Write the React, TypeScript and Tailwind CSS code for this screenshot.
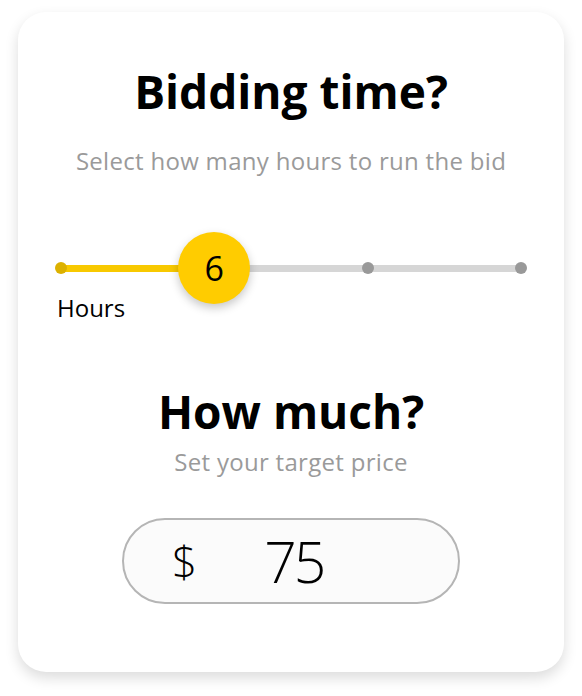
import React from "react";

const font = { fontFamily: '"Open Sans", "Noto Sans", sans-serif' };

export default function App() {
  const stops = [0, 1, 2, 3];
  const active = 1;
  const width = 460;
  const step = width / 3;
  return (
    <div className="min-h-screen bg-white pt-3 pl-[18px]" style={font}>
      <div className="w-[546px] h-[660px] rounded-[28px] bg-white shadow-[0_6px_14px_rgba(0,0,0,0.14)] flex flex-col items-center">
        <h1 className="mt-[56px] text-[46px] font-bold leading-none text-black">
          Bidding time?
        </h1>
        <p className="mt-[35px] text-[24px] leading-none text-[#9a9a9a] tracking-[0.3px]">
          Select how many hours to run the bid
        </p>
        <div className="relative mt-[59px] w-[460px] h-[72px]">
          <div className="absolute left-0 right-0 top-[33px] h-[7px] bg-[#d6d6d6]" />
          <div className="absolute left-0 top-[33px] h-[7px] bg-[#f8c900]" style={{ width: step * active }} />
          {stops.map((s) => (
            <div
              key={s}
              className={
                s < active
                  ? "absolute top-[30px] w-[12px] h-[12px] -ml-[6px] rounded-full bg-[#dcb100]"
                  : "absolute top-[30px] w-[12px] h-[12px] -ml-[6px] rounded-full bg-[#999999]"
              }
              style={{ left: step * s }}
            />
          ))}
          <div
            className="absolute top-0 w-[72px] h-[72px] -ml-[36px] rounded-full bg-[#ffcc00] shadow-[0_4px_10px_rgba(0,0,0,0.22)] flex items-center justify-center text-[34px] text-black leading-none"
            style={{ left: step * active }}
          >
            6
          </div>
        </div>
        <div className="self-start ml-[39px] -mt-[8px] text-[24px] leading-none text-black">Hours</div>
        <h2 className="mt-[68px] text-[46px] font-bold leading-none text-black">
          How much?
        </h2>
        <p className="mt-[16px] text-[24px] leading-none text-[#9a9a9a] tracking-[0.3px]">
          Set your target price
        </p>
        <div className="mt-[44px] w-[338px] h-[86px] rounded-full border-2 border-[#b5b5b5] bg-[#fbfbfb] flex items-center">
          <span className="ml-[48px] text-[44px] font-light leading-none text-black">$</span>
          <span className="ml-[67px] text-[57px] font-light leading-none text-black tracking-[-3px]">75</span>
        </div>
      </div>
    </div>
  );
}
